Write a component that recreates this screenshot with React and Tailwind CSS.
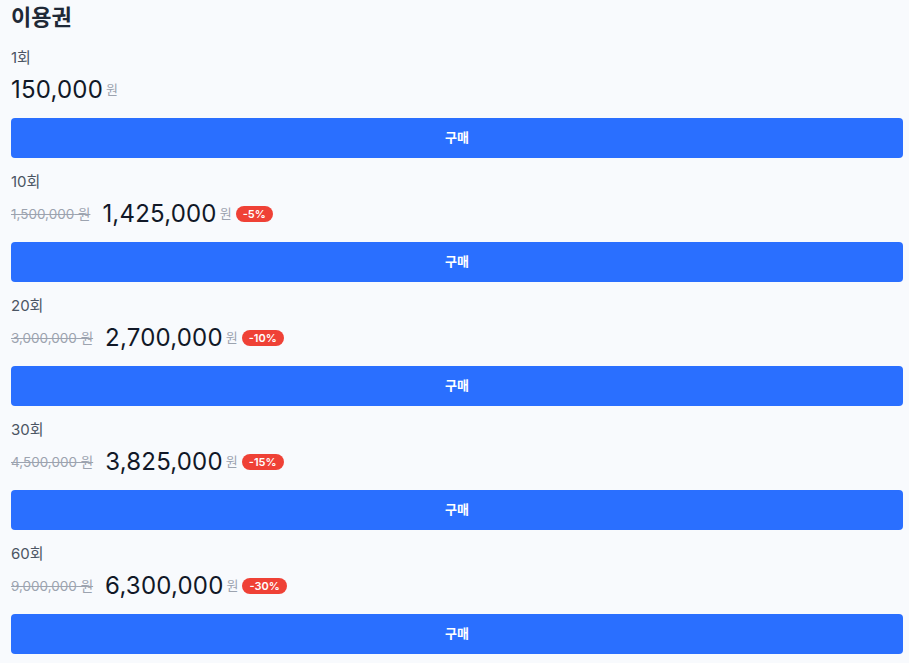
const plans = [
  { label: '1회', price: '150,000' },
  { label: '10회', original: '1,500,000', price: '1,425,000', discount: '-5%' },
  { label: '20회', original: '3,000,000', price: '2,700,000', discount: '-10%' },
  { label: '30회', original: '4,500,000', price: '3,825,000', discount: '-15%' },
  { label: '60회', original: '9,000,000', price: '6,300,000', discount: '-30%' },
]

const font = { fontFamily: 'Inter, "Noto Sans CJK KR", sans-serif' }

const App = () => {
  return (
    <div className="min-h-[663px] bg-[#f8fafd] pl-[11px] pr-[6px]" style={font}>
      {/* Header */}
      <h1 className="pt-[2px] h-[32px] text-[22px] leading-[30px] font-semibold text-[#1f2937]">이용권</h1>

      <div className="mt-[16px]">
        {plans.map((plan) => (
          <div key={plan.label} className="mb-[14px]">
            <p className="h-[20px] text-[15px] leading-[20px] text-[#4b5563]">{plan.label}</p>
            <div className="mt-[6px] h-[32px] flex items-center">
              {plan.original && (
                <span className="mr-[12px] text-[13.5px] text-[#9ca3af] line-through">
                  {plan.original} 원
                </span>
              )}
              <span className="text-[24px] leading-[32px] tracking-[0.2px] text-[#111827]">{plan.price}</span>
              <span className="ml-[3px] text-[13px] text-[#9ca3af]">원</span>
              {plan.discount && (
                <span className="ml-[4px] h-[16px] px-[7px] rounded-full bg-[#ef4136] text-white text-[11px] leading-[16px] font-semibold">
                  {plan.discount}
                </span>
              )}
            </div>
            <button className="mt-[12px] w-full h-[40px] rounded-[4px] bg-[#2a6fff] text-white text-[13px] font-semibold">
              구매
            </button>
          </div>
        ))}
      </div>
    </div>
  )
}

export default App
